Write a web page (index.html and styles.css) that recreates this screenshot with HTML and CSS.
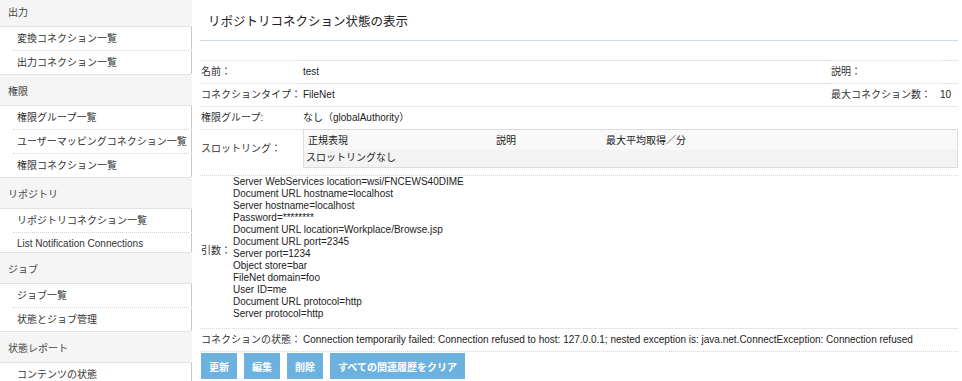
FILE: index.html
```html
<!DOCTYPE html>
<html lang="ja">
<head>
    <meta charset="UTF-8">
    <meta name="viewport" content="width=device-width, initial-scale=1.0">
    <title>リポジトリコネクション状態の表示</title>
    <link rel="stylesheet" href="styles.css">
</head>
<body>
    <div class="page">
        <!-- メニュー -->
        <div class="sidebar">
            <div class="nav-head first">出力</div>
            <a class="nav-item" href="#">変換コネクション一覧</a>
            <a class="nav-item last" href="#">出力コネクション一覧</a>

            <div class="nav-head">権限</div>
            <a class="nav-item" href="#">権限グループ一覧</a>
            <a class="nav-item" href="#">ユーザーマッピングコネクション一覧</a>
            <a class="nav-item last" href="#">権限コネクション一覧</a>

            <div class="nav-head">リポジトリ</div>
            <a class="nav-item" href="#">リポジトリコネクション一覧</a>
            <a class="nav-item last latin" href="#">List Notification Connections</a>

            <div class="nav-head">ジョブ</div>
            <a class="nav-item" href="#">ジョブ一覧</a>
            <a class="nav-item last" href="#">状態とジョブ管理</a>

            <div class="nav-head">状態レポート</div>
            <a class="nav-item" href="#">コンテンツの状態</a>
        </div>

        <div class="content">
            <h1 class="title">リポジトリコネクション状態の表示</h1>

            <div class="row">
                <div class="label">名前：</div>
                <div class="value">test</div>
                <div class="label label-right">説明：</div>
                <div class="value value-right"></div>
            </div>
            <div class="row">
                <div class="label">コネクションタイプ：</div>
                <div class="value">FileNet</div>
                <div class="label label-right">最大コネクション数：</div>
                <div class="value value-right">10</div>
            </div>
            <div class="row">
                <div class="label">権限グループ:</div>
                <div class="value">なし（globalAuthority）</div>
            </div>
            <div class="row row-throttle">
                <div class="label">スロットリング：</div>
                <div class="value">
                    <table class="throttle">
                        <tr class="throttle-head">
                            <td class="col-regex">正規表現</td>
                            <td class="col-desc">説明</td>
                            <td>最大平均取得／分</td>
                        </tr>
                        <tr class="throttle-body">
                            <td colspan="3">スロットリングなし</td>
                        </tr>
                    </table>
                </div>
            </div>
            <div class="row row-args">
                <div class="label">引数：</div>
                <div class="value">
                    Server WebServices location=wsi/FNCEWS40DIME<br>
                    Document URL hostname=localhost<br>
                    Server hostname=localhost<br>
                    Password=********<br>
                    Document URL location=Workplace/Browse.jsp<br>
                    Document URL port=2345<br>
                    Server port=1234<br>
                    Object store=bar<br>
                    FileNet domain=foo<br>
                    User ID=me<br>
                    Document URL protocol=http<br>
                    Server protocol=http
                </div>
            </div>
            <div class="row row-status">
                <div class="label">コネクションの状態：</div>
                <div class="value">Connection temporarily failed: Connection refused to host: 127.0.0.1; nested exception is: java.net.ConnectException: Connection refused</div>
            </div>

            <div class="buttons">
                <button type="button">更新</button>
                <button type="button">編集</button>
                <button type="button">削除</button>
                <button type="button">すべての関連履歴をクリア</button>
            </div>
        </div>
    </div>
</body>
</html>
```

FILE: styles.css
```css
body {
    margin: 0;
    padding: 0;
    font-family: "Liberation Sans", "Noto Sans CJK JP", sans-serif;
    font-size: 10px;
    color: #222;
    background-color: #fff;
}
.page {
    display: flex;
    align-items: flex-start;
}
/* メニュー */
.sidebar {
    width: 192px;
    flex-shrink: 0;
}
.nav-head {
    background-color: #f5f5f5;
    color: #444;
    height: 14px;
    line-height: 14px;
    padding: 10px 0 6px 8px;
    border-bottom: 1px solid #e2e2e2;
    overflow: hidden;
}
.nav-head.first {
    padding-top: 6px;
}
.nav-item {
    display: block;
    color: #333;
    text-decoration: none;
    height: 14px;
    line-height: 14px;
    padding: 5px 0 4px 17px;
    margin-bottom: 1px;
    border-right: 1px solid #c8c8c8;
    position: relative;
}
.nav-item.latin {
    height: 12px;
    line-height: 12px;
    padding: 5px 0 2px 17px;
}
.nav-item::after {
    content: "";
    position: absolute;
    left: 13px;
    right: 0;
    bottom: -1px;
    border-bottom: 1px dotted #d6d6d6;
}
.nav-item.last::after {
    left: 0;
    border-bottom: 1px solid #e2e2e2;
}
/* 本文 */
.content {
    flex: 1;
    margin: 0 4px 0 8px;
}
.title {
    font-size: 12.5px;
    font-weight: normal;
    color: #222;
    margin: 0 0 19px 0;
    padding: 14px 0 10px 8px;
    line-height: 16px;
    border-bottom: 1px solid #c9dced;
}
.row {
    display: flex;
}
.label {
    width: 103px;
    flex-shrink: 0;
    padding-left: 1px;
    box-sizing: border-box;
    line-height: 14px;
    padding-top: 4px;
    padding-bottom: 4px;
    border-top: 1px dotted #d8d8d8;
    color: #333;
}
.value {
    flex: 1;
    line-height: 14px;
    padding-top: 4px;
    padding-bottom: 4px;
    border-top: 1px solid #e6e6e6;
}
.label-right {
    width: 112px;
    padding-left: 3px;
}
.value-right {
    flex: 0 0 18px;
}
.row-throttle .label {
    display: flex;
    align-items: center;
    padding-bottom: 11px;
}
.row-throttle .value {
    padding: 0 0 7px 0;
    border-top: none;
}
.throttle {
    width: 100%;
    border-collapse: collapse;
    border: 1px solid #dcdcdc;
}
.throttle td {
    padding: 0 0 0 2px;
    line-height: 14px;
}
.throttle-head td {
    background-color: #f9f9f9;
    padding-top: 4px;
    padding-bottom: 2px;
}
.throttle-head td.col-regex {
    padding-left: 4px;
    width: 186px;
}
.throttle-head td.col-desc {
    width: 108px;
}
.throttle-body td {
    background-color: #f3f3f3;
    padding-top: 1px;
    padding-bottom: 2px;
}
.row-args .label {
    width: 33px;
    display: flex;
    align-items: center;
    padding-bottom: 6px;
}
.row-args .value {
    line-height: 12px;
    padding-top: 0;
    padding-bottom: 8px;
    border-top: 1px dotted #d8d8d8;
}
.row-status .label,
.row-status .value {
    border-bottom: 1px dotted #d8d8d8;
}
.buttons {
    display: flex;
    gap: 7px;
    padding: 1px 0 0 1px;
}
button {
    font-family: "Liberation Sans", "Noto Sans CJK JP", sans-serif;
    font-size: 10px;
    font-weight: bold;
    color: #fff;
    background-color: #6db2de;
    border: none;
    height: 26px;
    padding: 0 8px;
    cursor: pointer;
}
```
